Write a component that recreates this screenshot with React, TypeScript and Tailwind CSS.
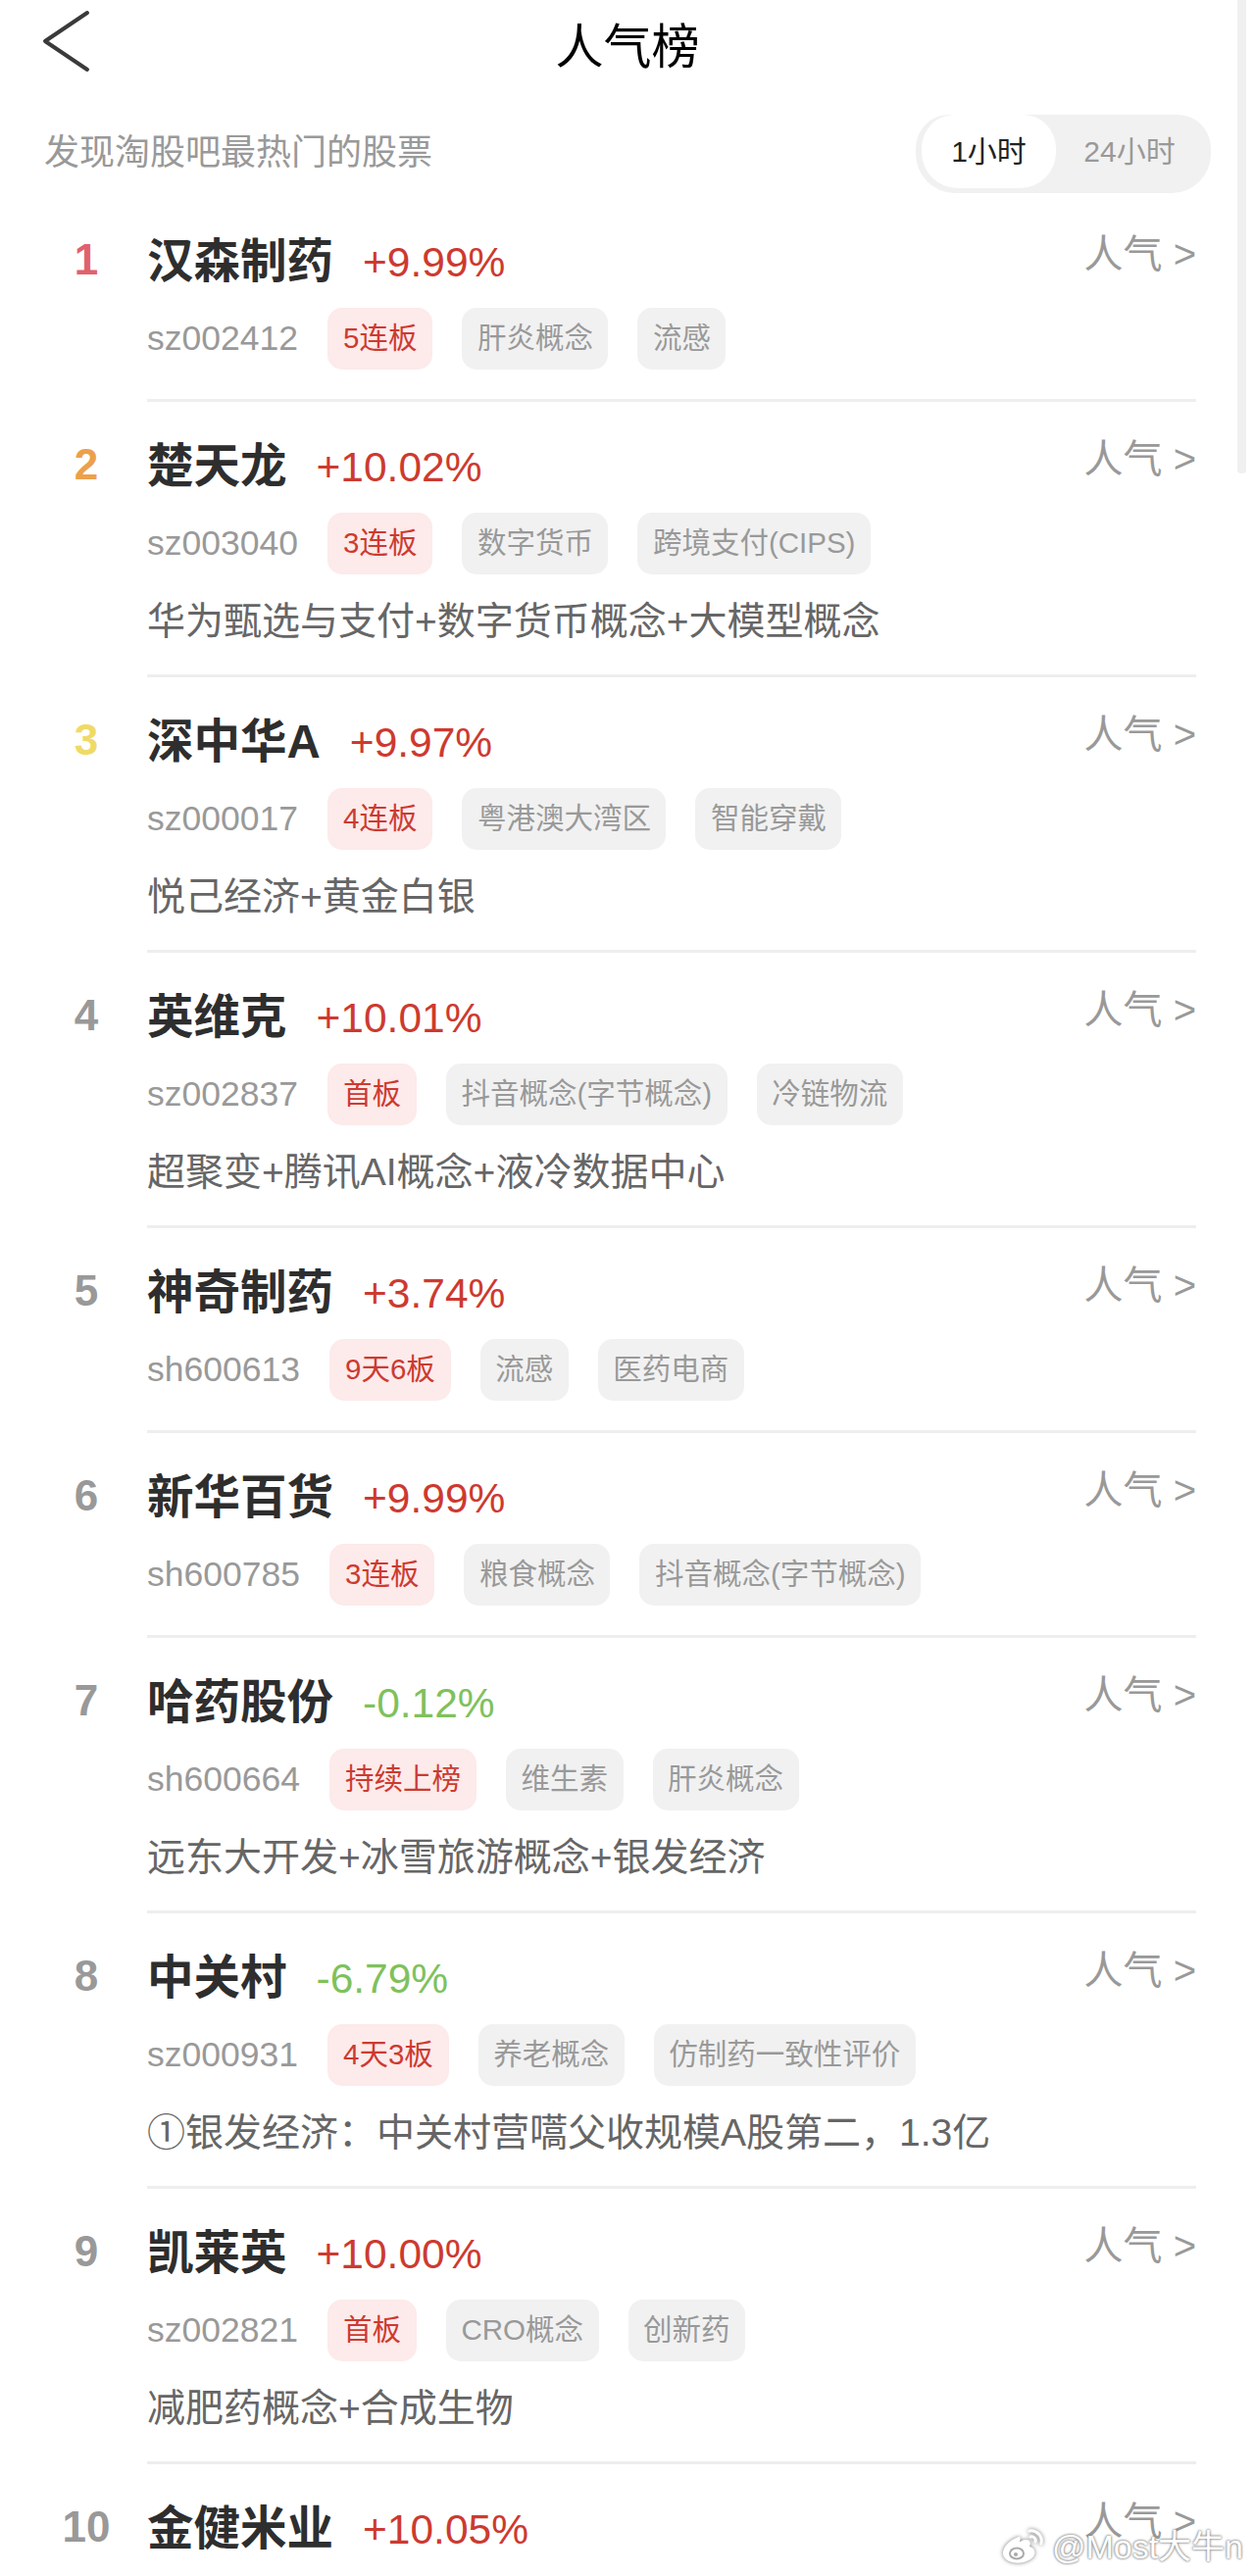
const rows = [
  { rank: 1, rankColor: "text-[#e0616e]", name: "汉森制药", pct: "+9.99%", code: "sz002412", hot: "5连板", tags: ["肝炎概念", "流感"] },
  { rank: 2, rankColor: "text-[#eca04c]", name: "楚天龙", pct: "+10.02%", code: "sz003040", hot: "3连板", tags: ["数字货币", "跨境支付(CIPS)"], note: "华为甄选与支付+数字货币概念+大模型概念" },
  { rank: 3, rankColor: "text-[#f0da66]", name: "深中华A", pct: "+9.97%", code: "sz000017", hot: "4连板", tags: ["粤港澳大湾区", "智能穿戴"], note: "悦己经济+黄金白银" },
  { rank: 4, name: "英维克", pct: "+10.01%", code: "sz002837", hot: "首板", tags: ["抖音概念(字节概念)", "冷链物流"], note: "超聚变+腾讯AI概念+液冷数据中心" },
  { rank: 5, name: "神奇制药", pct: "+3.74%", code: "sh600613", hot: "9天6板", tags: ["流感", "医药电商"] },
  { rank: 6, name: "新华百货", pct: "+9.99%", code: "sh600785", hot: "3连板", tags: ["粮食概念", "抖音概念(字节概念)"] },
  { rank: 7, name: "哈药股份", pct: "-0.12%", code: "sh600664", hot: "持续上榜", tags: ["维生素", "肝炎概念"], note: "远东大开发+冰雪旅游概念+银发经济" },
  { rank: 8, name: "中关村", pct: "-6.79%", code: "sz000931", hot: "4天3板", tags: ["养老概念", "仿制药一致性评价"], note: "①银发经济：中关村营嚆父收规模A股第二，1.3亿" },
  { rank: 9, name: "凯莱英", pct: "+10.00%", code: "sz002821", hot: "首板", tags: ["CRO概念", "创新药"], note: "减肥药概念+合成生物" },
  { rank: 10, name: "金健米业", pct: "+10.05%", code: "", hot: "", tags: [] },
];

type Row = { rank: number; rankColor?: string; name: string; pct: string; code: string; hot: string; tags: string[]; note?: string };

function StockRow({ row }: { row: Row }) {
  const down = row.pct.startsWith("-");
  return (
    <div className="mr-[60px] flex">
      <div className={`w-[150px] pl-[26px] pt-[33px] text-center text-[44px] leading-[62px] font-bold ${row.rankColor ?? "text-[#999999]"}`}>
        {row.rank}
      </div>
      <div className="flex-1 border-b-[3px] border-[#eeeeee] pt-[33px] pb-[30px]">
        <div className="flex h-[62px] items-start justify-between">
          <div className="flex items-center">
            <span className="text-[47.5px] leading-[62px] font-bold text-[#2e2e2e]">{row.name}</span>
            <span className={`ml-[30px] mt-[3px] text-[42.5px] leading-[62px] ${down ? "text-[#7fc15c]" : "text-[#cd3a30]"}`}>{row.pct}</span>
          </div>
          <span className="-mt-[6px] text-[40px] leading-[62px] text-[#999999]">人气 &gt;</span>
        </div>
        {row.code && (
          <div className="mt-[18px] flex h-[63px] items-center">
            <span className="mr-[30px] text-[35.5px] text-[#999999]">{row.code}</span>
            <span className="mr-[30px] flex h-[63px] items-center rounded-[15px] bg-[#fdeaea] px-[16px] text-[29.5px] text-[#cd3a30]">{row.hot}</span>
            {row.tags.map((tag) => (
              <span key={tag} className="mr-[30px] flex h-[63px] items-center rounded-[15px] bg-[#f1f1f1] px-[15.5px] text-[29.5px] text-[#999999]">{tag}</span>
            ))}
          </div>
        )}
        {row.note && <div className="-mb-[3px] mt-[21px] text-[39px] leading-[54px] text-[#666666]">{row.note}</div>}
      </div>
    </div>
  );
}

export default function App() {
  return (
    <div className="relative h-[2628px] overflow-hidden bg-white font-['Liberation_Sans','Noto_Sans_CJK_SC',sans-serif]">
      {/* 헤더 */}
      <div className="relative flex h-[117px] items-start justify-center">
        <span className="text-[49px] leading-[96px] text-black">人气榜</span>
        <svg className="absolute left-[43px] top-[10px]" width="50" height="66" viewBox="0 0 50 66" fill="none">
          <path d="M46 3 L3 32 L46 61" stroke="#3a3a3a" strokeWidth="4" strokeLinecap="round" strokeLinejoin="round" />
        </svg>
      </div>
      <div className="flex h-[84px] items-start justify-between pl-[45px] pr-[45px]">
        <span className="mt-[16px] text-[36px] leading-[46px] text-[#999999]">发现淘股吧最热门的股票</span>
        <div className="flex h-[80px] w-[301px] items-start rounded-b-[40px] rounded-t-[34px] bg-[#f1f1f1] pl-[6px]">
          <span className="flex h-[75px] w-[137px] items-center justify-center rounded-b-[37px] rounded-t-[34px] bg-white text-[30px] text-[#222222]">1小时</span>
          <span className="flex h-[75px] flex-1 items-center justify-center pr-[8px] text-[30px] text-[#999999]">24小时</span>
        </div>
      </div>
      {rows.map((row) => (
        <StockRow key={row.rank} row={row} />
      ))}
      {/* 스크롤바 */}
      <div className="absolute right-[9px] top-0 h-[483px] w-[9px] rounded-b-[4px] bg-[#f0f0f0]" />
      {/* 워터마크 */}
      <div className="absolute bottom-[6px] right-[12px] flex items-center gap-[7px] text-[34px] leading-[48px] text-white [text-shadow:0_0_3px_#777,0_0_2px_#888]">
        <svg className="[filter:drop-shadow(0_0_2px_#777)]" width="45" height="38" viewBox="0 0 45 38" fill="none">
          <path d="M18 9 C7 13 1 21 2 27 C4 35 15 37 23 35 C31 33 36 28 34 23 C33 20 30 19 29 19 C31 14 29 12 25 12 C22 12 20 14 19 14 C20 11 20 9 18 9 Z" fill="white" />
          <ellipse cx="16" cy="26" rx="7" ry="5.5" stroke="#aaaaaa" strokeWidth="2" />
          <circle cx="15" cy="27" r="2" fill="#aaaaaa" />
          <path d="M29 3 C36 2 43 8 41 16 M30 9 C33 8 36 11 35 14" stroke="white" strokeWidth="3" strokeLinecap="round" />
        </svg>
        <span>@Most大牛n</span>
      </div>
    </div>
  );
}
